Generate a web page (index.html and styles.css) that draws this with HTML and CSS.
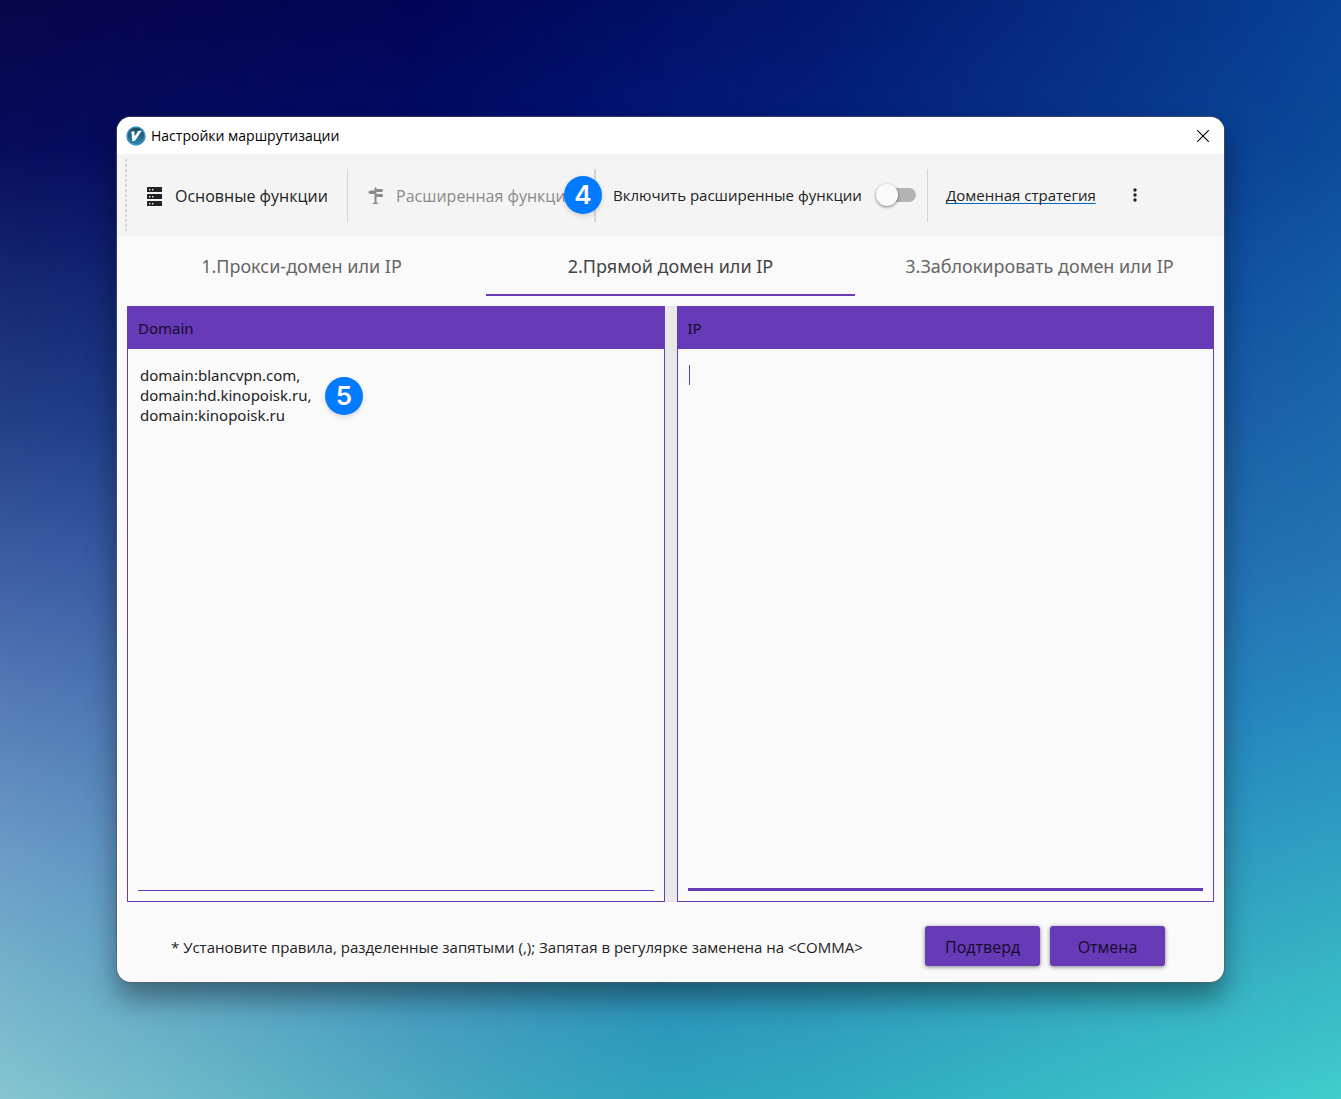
FILE: index.html
```html
<!DOCTYPE html>
<html lang="ru">
<head>
<meta charset="utf-8">
<title>Настройки маршрутизации</title>
<link rel="stylesheet" href="styles.css">
</head>
<body>
<main class="window">
  <header class="titlebar">
    <svg class="app-logo" viewBox="0 0 20 20" aria-hidden="true">
      <defs><linearGradient id="disc" x1="0" y1="0" x2="0" y2="1"><stop offset="0" stop-color="#1c4a63"/><stop offset="1" stop-color="#2c86ab"/></linearGradient></defs>
      <circle cx="10" cy="10" r="9" fill="url(#disc)" stroke="#3d8fc4" stroke-width="1.4"/>
      <path d="M4.200 6 8.300 5.200 8.700 10.200 11.800 5.800 11 5.200 16 4.600 9 14.800 6.200 15.200 5.600 6.800Z" fill="#fff"/>
    </svg>
    <h1 class="title">Настройки маршрутизации</h1>
    <button class="close" type="button" aria-label="Закрыть">
      <svg viewBox="0 0 12 12" width="12" height="12"><path d="M0 0 12 12M12 0 0 12" stroke="#000" stroke-width="1.1"/></svg>
    </button>
  </header>

  <div class="toolbar">
    <span class="grip"></span>
    <button class="tool tool-basic" type="button">
      <svg viewBox="0 0 16 19" width="16" height="19" aria-hidden="true">
        <g fill="#222"><rect y="0" width="15" height="5" rx=".6"/><rect y="7" width="15" height="5" rx=".6"/><rect y="14" width="15" height="5" rx=".6"/></g>
        <g fill="#f4f4f4"><rect x="2" y="2" width="1.400" height="1.400"/><rect x="5" y="2" width="1.400" height="1.400"/><rect x="2" y="9" width="1.400" height="1.400"/><rect x="5" y="9" width="1.400" height="1.400"/><rect x="2" y="16" width="1.400" height="1.400"/><rect x="5" y="16" width="1.400" height="1.400"/></g>
      </svg>
      Основные функции
    </button>
    <div class="advanced">
      <button class="tool" type="button" disabled>
        <svg viewBox="0 0 16 18" width="16" height="18" aria-hidden="true">
          <path fill="#8a8a8a" d="M6.500 1Q7.500-.4 8.500 1V2H14L15.300 3.500 14 5H8.500V7H14Q15 7 15 8.500T14 10H8.500V15.500Q10.500 15.500 10.500 17H4.500Q4.500 15.500 6.500 15.500V7H2L0 5.200 2 3.500H6.500Z"/>
        </svg>
        <span class="clip">Расширенная функци</span>
      </button>
      <span class="badge badge-4">4</span>
    </div>
    <label class="toggle">Включить расширенные функции <input class="switch" type="checkbox" role="switch"></label>
    <div class="strategy">
      <a href="#strategy">Доменная стратегия</a>
      <button class="more" type="button" aria-label="Ещё">
        <svg viewBox="0 0 4 14" width="4" height="14"><g fill="#222"><circle cx="2" cy="2" r="1.700"/><circle cx="2" cy="7" r="1.700"/><circle cx="2" cy="12" r="1.700"/></g></svg>
      </button>
    </div>
  </div>

  <nav class="tabs" role="tablist">
    <button class="tab" type="button" role="tab">1.Прокси-домен или IP</button>
    <button class="tab active" type="button" role="tab" aria-selected="true">2.Прямой домен или IP</button>
    <button class="tab" type="button" role="tab">3.Заблокировать домен или IP</button>
  </nav>

  <div class="panels">
    <section class="panel">
      <label class="panel-head" for="domain">Domain</label>
      <div class="panel-body">
        <textarea class="field" id="domain" spellcheck="false">domain:blancvpn.com,
domain:hd.kinopoisk.ru,
domain:kinopoisk.ru</textarea>
        <span class="badge badge-5">5</span>
      </div>
    </section>
    <div class="splitter"></div>
    <section class="panel">
      <label class="panel-head" for="ip">IP</label>
      <div class="panel-body">
        <textarea class="field focused" id="ip" spellcheck="false"></textarea>
        <span class="caret"></span>
      </div>
    </section>
  </div>

  <footer class="footer">
    <p class="hint">* Установите правила, разделенные запятыми (,); Запятая в регулярке заменена на &lt;COMMA&gt;</p>
    <button class="action" type="button"><span class="clip action-text">Подтверд</span></button>
    <button class="action" type="button">Отмена</button>
  </footer>
</main>
</body>
</html>
```
FILE: styles.css
```css
* { box-sizing: border-box; }

body {
  position: relative;
  z-index: 0;
  margin: 0;
  min-height: 100vh;
  padding: 117px;
  display: flex;
  font: 15px/20px "Open Sans", "Noto Sans", sans-serif;
  color: #222;
  background: linear-gradient(#00035c, #00107a 20%, #1a4a9a 50%, #2878b4 80%, #2a9aba);
}

/* Wallpaper: the left and right edges fade into the centre column */
body::before,
body::after {
  content: "";
  position: absolute;
  inset: 0;
  z-index: -1;
}
body::before {
  background: linear-gradient(#06064a, #070c5a 13%, #15266f 25%, #233f86 38%, #3d5da3 51%, #557cb6 64%, #6a9ac6 77%, #74b0cb 88%, #86c5cf);
  mask-image: linear-gradient(to right, #000, transparent 50%);
}
body::after {
  background: linear-gradient(#074296, #0b4a9a 13%, #135aa5 25%, #1c66ab 38%, #2474b5 51%, #2689bf 64%, #2fa0c2 77%, #38b5c4 88%, #40cdcd);
  mask-image: linear-gradient(to right, transparent 30%, rgba(0, 0, 0, .3) 60%, #000);
}

button { font: inherit; color: inherit; border: 0; padding: 0; background: none; }

.window {
  flex: 1;
  min-width: 0;
  display: flex;
  flex-direction: column;
  background: #fafafa;
  border-radius: 14px;
  box-shadow: 0 0 1px 1px rgba(90, 90, 90, .6), 0 16px 28px rgba(0, 0, 0, .4);
}

.titlebar {
  height: 37px;
  padding: 0 15px 0 9px;
  display: flex;
  align-items: center;
  gap: 5px;
  background: #fff;
  border-radius: 14px 14px 0 0;
}
.app-logo { width: 20px; height: 20px; }
.title { flex: 1; margin: 0; font-size: 14px; font-weight: 400; color: #000; }
.close { display: flex; }

.toolbar {
  height: 82px;
  padding: 0 8px;
  display: flex;
  align-items: center;
  background: #f4f4f4;
}
.grip { width: 2px; height: 72px; background: repeating-linear-gradient(#d6d6d6 0 3px, transparent 3px 5px); }
.tool { display: flex; align-items: center; gap: 12px; padding-top: 2px; font-size: 16px; white-space: nowrap; }
.tool:disabled { color: #8a8a8a; }
.tool-basic { width: 183px; margin: 0 17px 0 20px; }
.clip { display: block; overflow: hidden; white-space: nowrap; }
.advanced, .toggle, .strategy { height: 53px; display: flex; align-items: center; border-left: 1px solid #d4d4d4; }
.advanced { position: relative; width: 247px; padding-left: 20px; }
.toggle { width: 333px; padding: 0 11px 0 17px; justify-content: space-between; border-left-width: 2px; white-space: nowrap; }
.strategy { padding-left: 18px; gap: 37px; }
.strategy a { color: #222; text-decoration: underline 1px #0067c0; text-underline-offset: 2px; text-decoration-skip-ink: none; white-space: nowrap; }
.more { display: flex; }

.switch {
  appearance: none;
  display: flex;
  align-items: center;
  width: 36px;
  height: 14px;
  margin: 0;
  background: #b3b3b3;
  border-radius: 7px;
}
.switch::before {
  content: "";
  width: 22px;
  height: 22px;
  margin-left: -4px;
  border-radius: 50%;
  background: #fafafa;
  box-shadow: 0 1px 3px rgba(0, 0, 0, .5);
}

.badge {
  position: absolute;
  width: 38px;
  height: 38px;
  border-radius: 50%;
  background: #007aff;
  color: #fff;
  font: 600 26px/38px Inter, sans-serif;
  text-align: center;
  box-shadow: 0 2px 5px rgba(0, 0, 0, .15);
}
.badge-4 { right: -8px; top: 7px; }
.badge-5 { left: 197px; top: 28px; }

.tabs { display: grid; grid-template-columns: repeat(3, 1fr); height: 60px; }
.tab { padding-top: 2px; font-family: "Noto Sans", sans-serif; font-size: 18px; color: #666; border-bottom: 2px solid transparent; white-space: nowrap; }
.tab.active { color: #444; border-color: #673ab7; }

.panels { flex: 1; margin: 10px 10px 0; display: flex; }
.panel { flex: 1; min-width: 0; display: flex; flex-direction: column; font-family: "Noto Sans", sans-serif; }
.panel-head { height: 43px; padding-left: 11px; line-height: 44px; background: #673ab7; color: #160b2c; }
.panel-body { position: relative; flex: 1; display: flex; padding: 10px; border: 1px solid #673ab7; border-top: 0; }
.field {
  flex: 1;
  min-width: 0;
  min-height: 80px;
  padding: 6px 2px;
  border: 0;
  border-bottom: 1px solid #673ab7;
  outline: 0;
  resize: none;
  background: none;
  color: #222;
  font: inherit;
}
.field.focused { border-bottom-width: 3px; }
.caret { position: absolute; left: 11px; top: 16px; width: 1px; height: 20px; background: #673ab7; }
.splitter { width: 12px; background: #e8e8e8; }

.footer { height: 80px; padding: 8px 59px 0 54px; display: flex; align-items: center; gap: 10px; }
.hint { flex: 1; margin: 0; padding-top: 2px; white-space: nowrap; }
.action {
  width: 115px;
  height: 40px;
  padding-top: 2px;
  display: flex;
  align-items: center;
  justify-content: center;
  background: #673ab7;
  color: #160b2c;
  font-size: 16px;
  border-radius: 3px;
  box-shadow: 0 1px 4px rgba(0, 0, 0, .5);
}
.action-text { width: 75px; }
```
